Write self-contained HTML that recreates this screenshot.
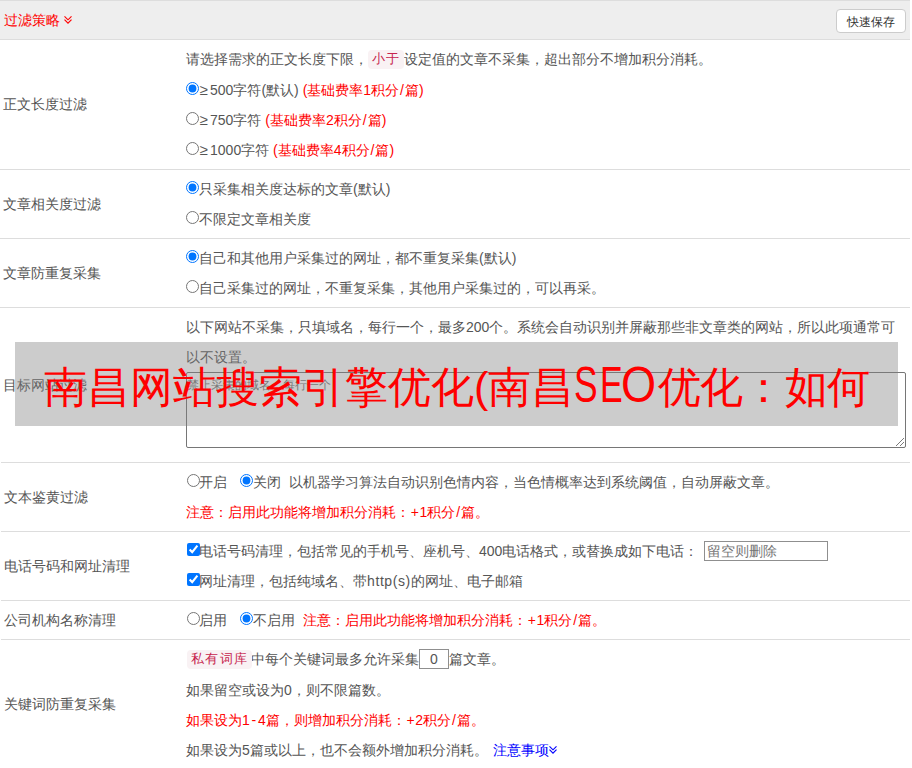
<!DOCTYPE html>
<html><head><meta charset="utf-8">
<style>
html,body{margin:0;padding:0;}
body{width:912px;height:768px;overflow:hidden;background:#fff;position:relative;font-family:"Liberation Sans",sans-serif;font-size:14px;color:#555;}
.hdr{position:absolute;left:0;top:0;width:910px;height:38px;background:#eee;border-top:1px solid #ddd;border-bottom:1px solid #ddd;}
.sep{position:absolute;left:0;width:910px;height:1px;background:#ddd;}
.ln{position:absolute;left:186px;height:30px;line-height:30px;white-space:nowrap;}
.lbl{position:absolute;left:3px;height:30px;line-height:30px;white-space:nowrap;}
.r{color:#f00;}
.ge{padding-left:.5px;letter-spacing:2.3px;font-size:15px;}
.m1{margin-left:1px!important;margin-right:-1px!important;}
.sl{padding:0 1px;}
.pl{padding:0 .65px;}
.hy{padding:0 1.75px;}
input[type=radio],input[type=checkbox]{margin:0;width:13px;height:13px;vertical-align:middle;position:relative;top:-3px;}
.code{display:inline-block;background:#f9f2f4;color:#c7254e;border-radius:4px;padding:0 3.2px 0 4px;font-size:12.6px;letter-spacing:1.4px;height:19px;line-height:19px;vertical-align:middle;position:relative;top:-1px;}
.btn{position:absolute;left:836px;top:9px;width:68px;height:22px;border:1px solid #ccc;border-radius:4px;background:#fff;font-size:12px;color:#333;line-height:24px;text-align:center;}
.overlay{position:absolute;left:15px;top:342px;width:883px;height:84px;background:rgba(128,128,128,0.4);}
.tl{position:absolute;top:342.5px;height:84px;line-height:84px;font-size:50px;color:#f00;transform-origin:0 0;}
.title{position:absolute;left:45px;top:345px;height:84px;line-height:84px;font-size:43px;color:#f00;white-space:nowrap;}
</style></head><body>
<div class="hdr"></div>
<div style="position:absolute;left:4px;top:5px;line-height:30px;color:#f00;">过滤策略</div>
<svg style="position:absolute;left:64px;top:15px" width="9" height="9" viewBox="0 0 9 9"><polyline points="0.5,1.3 4,4.8 7.5,1.3" fill="none" stroke="#f00" stroke-width="1.15"/><polyline points="0.5,4.7 4,8.2 7.5,4.7" fill="none" stroke="#f00" stroke-width="1.15"/></svg>
<div class="btn">快速保存</div>

<div class="sep" style="top:169px"></div>
<div class="sep" style="top:238px"></div>
<div class="sep" style="top:307px"></div>
<div class="sep" style="top:462px;left:1px;width:909px"></div>
<div class="sep" style="top:531px;left:1px;width:909px"></div>
<div class="sep" style="top:600px;left:1px;width:909px"></div>
<div class="sep" style="top:639px;left:1px;width:909px"></div>

<!-- row 1 -->
<div class="lbl" style="top:89px">正文长度过滤</div>
<div class="ln" style="top:44px">请选择需求的正文长度下限，<span class="code">小于</span>设定值的文章不采集，超出部分不增加积分消耗。</div>
<div class="ln" style="top:75px"><input type="radio" checked><span class="ge">≥</span>500字符(默认) <span class="r">(基础费率1积分<span class="sl">/</span>篇)</span></div>
<div class="ln" style="top:105px"><input type="radio"><span class="ge">≥</span>750字符 <span class="r">(基础费率2积分<span class="sl">/</span>篇)</span></div>
<div class="ln" style="top:135px"><input type="radio"><span class="ge">≥</span>1000字符 <span class="r">(基础费率4积分<span class="sl">/</span>篇)</span></div>

<!-- row 2 -->
<div class="lbl" style="top:189px">文章相关度过滤</div>
<div class="ln" style="top:174px"><input type="radio" checked>只采集相关度达标的文章(默认)</div>
<div class="ln" style="top:204px"><input type="radio">不限定文章相关度</div>

<!-- row 3 -->
<div class="lbl" style="top:258px">文章防重复采集</div>
<div class="ln" style="top:243px"><input type="radio" checked>自己和其他用户采集过的网址，都不重复采集(默认)</div>
<div class="ln" style="top:273px"><input type="radio">自己采集过的网址，不重复采集，其他用户采集过的，可以再采。</div>

<!-- row 4 -->
<div class="lbl" style="top:370px">目标网站过滤</div>
<div class="ln" style="top:312px">以下网站不采集，只填域名，每行一个，最多200个。系统会自动识别并屏蔽那些非文章类的网站，所以此项通常可</div>
<div class="ln" style="top:342px">以不设置。</div>
<div style="position:absolute;left:186px;top:372px;width:718px;height:74px;border:1px solid #767676;border-radius:2px;"></div>
<div style="position:absolute;left:187px;top:374px;line-height:22px;font-size:12px;color:#757575;white-space:nowrap;">禁止采集的域名，每行一个</div>
<svg style="position:absolute;left:894px;top:436px" width="11" height="11" viewBox="0 0 11 11"><line x1="2" y1="10" x2="10" y2="2" stroke="#7a7a7a" stroke-width="1"/><line x1="6" y1="10" x2="10" y2="6" stroke="#7a7a7a" stroke-width="1"/></svg>

<!-- row 5 -->
<div class="lbl" style="left:4px;top:482px">文本鉴黄过滤</div>
<div class="ln" style="top:467px"><input type="radio" class="m1">开启<span style="display:inline-block;width:13px"></span><input type="radio" checked>关闭<span style="display:inline-block;width:8px"></span>以机器学习算法自动识别色情内容，当色情概率达到系统阈值，自动屏蔽文章。</div>
<div class="ln r" style="top:497px">注意：启用此功能将增加积分消耗：<span class="pl">+</span>1积分<span class="sl">/</span>篇。</div>

<!-- row 6 -->
<div class="lbl" style="left:4px;top:551px">电话号码和网址清理</div>
<div class="ln" style="top:536px"><input type="checkbox" class="m1" checked>电话号码清理，包括常见的手机号、座机号、400电话格式，或替换成如下电话：</div>
<div style="position:absolute;left:704px;top:541px;width:122px;height:18px;border:1px solid #8f8f8f;"></div>
<div style="position:absolute;left:707px;top:541px;line-height:21px;color:#757575;white-space:nowrap;">留空则删除</div>
<div class="ln" style="top:566px"><input type="checkbox" class="m1" checked>网址清理，包括纯域名、带<span style="letter-spacing:.6px">http(s)</span>的网址、电子邮箱</div>

<!-- row 7 -->
<div class="lbl" style="left:4px;top:605px">公司机构名称清理</div>
<div class="ln" style="top:605px"><input type="radio" class="m1">启用<span style="display:inline-block;width:13px"></span><input type="radio" checked>不启用<span style="display:inline-block;width:8px"></span><span class="r">注意：启用此功能将增加积分消耗：<span class="pl">+</span>1积分<span class="sl">/</span>篇。</span></div>

<!-- row 8 -->
<div class="lbl" style="left:4px;top:689px">关键词防重复采集</div>
<div class="ln" style="top:644px"><span class="code" style="margin-left:1px;margin-right:-1px">私有词库</span>中每个关键词最多允许采集</div>
<div style="position:absolute;left:419px;top:649px;width:28px;height:18px;border:1px solid #8f8f8f;text-align:center;line-height:18px;">0</div>
<div class="ln" style="top:644px;left:449px">篇文章。</div>
<div class="ln" style="top:675px">如果留空或设为0，则不限篇数。</div>
<div class="ln r" style="top:705px">如果设为1<span class="hy">-</span>4篇，则增加积分消耗：<span class="pl">+</span>2积分<span class="sl">/</span>篇。</div>
<div class="ln" style="top:735px">如果设为5篇或以上，也不会额外增加积分消耗。<span style="display:inline-block;width:5px"></span><span style="color:#00f">注意事项</span></div>
<svg style="position:absolute;left:549px;top:745px" width="9" height="9" viewBox="0 0 9 9"><polyline points="0.5,1.3 4,4.8 7.5,1.3" fill="none" stroke="#00f" stroke-width="1.15"/><polyline points="0.5,4.7 4,8.2 7.5,4.7" fill="none" stroke="#00f" stroke-width="1.15"/></svg>

<div class="overlay"></div>
<div class="title" style="left:44px">南昌网站搜索引擎优化(南昌</div>
<div class="title" style="left:657.5px;letter-spacing:-0.6px">优化：如何</div>
<div class="tl" style="left:574px;transform:scaleX(0.708)">S</div>
<div class="tl" style="left:600px;transform:scaleX(0.681)">E</div>
<div class="tl" style="left:621px;transform:scaleX(0.901)">O</div>
</body></html>
